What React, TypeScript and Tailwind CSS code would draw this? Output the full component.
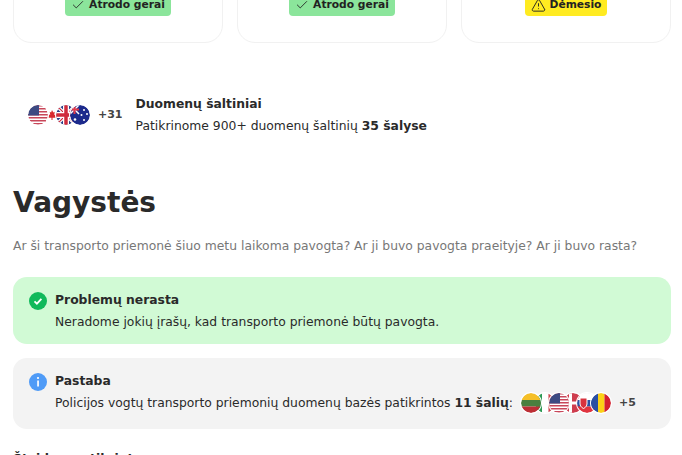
import type { ReactNode } from "react";
import { AlertTriangle, Check } from "lucide-react";

const Flag = ({ children, top }: { children: ReactNode; top?: boolean }) => (
  <svg
    viewBox="0 0 20 20"
    className={`h-5 w-5 shrink-0 rounded-full ring-1 ring-white ${top ? "relative z-10" : ""}`}
  >
    <defs>
      <clipPath id="round">
        <circle cx="10" cy="10" r="10" />
      </clipPath>
    </defs>
    <g clipPath="url(#round)">{children}</g>
  </svg>
);

const Us = () => (
  <Flag top>
    <rect width="20" height="20" fill="#fff" />
    {[0, 3, 6, 9, 12, 15, 18].map((y) => (
      <rect key={y} y={y} width="20" height="1.5" fill="#c8475a" />
    ))}
    <rect width="11" height="10.5" fill="#3c4a82" />
  </Flag>
);

const Ca = () => (
  <Flag>
    <rect width="20" height="20" fill="#fff" />
    <rect width="4" height="20" fill="#d8292f" />
    <rect x="16" width="4" height="20" fill="#d8292f" />
    <path d="M10 5l1.3 2.4 1.4-.6-.5 3.2 1.600-.8.500 1.200 1.200.2-1.600 2.200H10.500V15h-1v-2.200H6.500L4.900 10.600l1.200-.2.500-1.200 1.600.8-.500-3.200 1.400.6z" fill="#d8292f" />
  </Flag>
);

const Gb = () => (
  <Flag>
    <rect width="20" height="20" fill="#2b3f87" />
    <path d="M0 0l20 20M20 0L0 20" stroke="#fff" strokeWidth="3.500" />
    <path d="M0 0l20 20M20 0L0 20" stroke="#cf2b3c" strokeWidth="1.200" />
    <path d="M10 0v20M0 10h20" stroke="#fff" strokeWidth="6" />
    <path d="M10 0v20M0 10h20" stroke="#cf2b3c" strokeWidth="3.500" />
  </Flag>
);

const Au = () => (
  <Flag>
    <rect width="20" height="20" fill="#1c2a8c" />
    <path d="M0 0l9 9M9 0L0 9" stroke="#fff" strokeWidth="1.500" />
    <path d="M4.500 0v9M0 4.500h9" stroke="#e0394a" strokeWidth="2" />
    <circle cx="14" cy="5" r="1" fill="#fff" />
    <circle cx="17" cy="9" r="1" fill="#fff" />
    <circle cx="11.500" cy="10" r="1" fill="#fff" />
    <circle cx="14" cy="15" r="1" fill="#fff" />
    <circle cx="5" cy="14.500" r="1.300" fill="#fff" />
  </Flag>
);

const Lt = () => (
  <Flag top>
    <rect width="20" height="7" fill="#f5bf27" />
    <rect y="7" width="20" height="6.500" fill="#4a7f3f" />
    <rect y="13.500" width="20" height="6.500" fill="#bd2e35" />
  </Flag>
);

const It = () => (
  <Flag>
    <rect width="7" height="20" fill="#2e9a55" />
    <rect x="7" width="6.500" height="20" fill="#fff" />
    <rect x="13.500" width="6.500" height="20" fill="#d0414b" />
  </Flag>
);

const Dk = () => (
  <Flag>
    <rect width="20" height="20" fill="#cf3d4e" />
    <rect x="6" width="3" height="20" fill="#fff" />
    <rect y="8.500" width="20" height="3" fill="#fff" />
  </Flag>
);

const Sk = () => (
  <Flag>
    <rect width="20" height="7" fill="#fff" />
    <rect y="7" width="20" height="6.500" fill="#2b52a3" />
    <rect y="13.500" width="20" height="6.500" fill="#e0343f" />
    <path d="M3 5h7v6c0 3-3.500 4.500-3.500 4.500S3 14 3 11z" fill="#d8323e" stroke="#fff" />
  </Flag>
);

const Ro = () => (
  <Flag>
    <rect width="7" height="20" fill="#2b4fa3" />
    <rect x="7" width="6.500" height="20" fill="#fcd116" />
    <rect x="13.500" width="6.500" height="20" fill="#d5202f" />
  </Flag>
);

const FlagStack = ({ children }: { children: ReactNode }) => (
  <div className="flex items-center [&>svg+svg]:ml-[-6px]">{children}</div>
);

const StatusCard = ({ warn }: { warn?: boolean }) => (
  <div className="flex h-[100px] items-start justify-center rounded-[18px] border border-[#f1f1f1] bg-white pt-[42px]">
    {warn ? (
      <span className="flex h-[30px] items-center gap-1 rounded-[4px] bg-[#ffeb21] px-[6px] pt-[8px] text-[10.7px] font-bold text-[#222]">
        <AlertTriangle className="h-[15px] w-[15px]" strokeWidth={1.5} />
        Dėmesio
      </span>
    ) : (
      <span className="flex h-[30px] items-center gap-1 rounded-[4px] bg-[#8be59b] px-[6px] pt-[8px] text-[10.7px] font-bold text-[#222]">
        <Check className="h-[14px] w-[14px]" strokeWidth={1.5} />
        Atrodo gerai
      </span>
    )}
  </div>
);

export default function App() {
  return (
    <div className="h-[455px] overflow-hidden bg-white pr-[11px] pl-[13px] font-['DejaVu_Sans',sans-serif] text-[#2a2a2a]">
      <div className="mt-[-57px] grid grid-cols-3 gap-[14px]">
        <StatusCard />
        <StatusCard />
        <StatusCard warn />
      </div>

      <div className="mt-[51px] flex items-center pl-[15px]">
        <FlagStack>
          <Us />
          <Ca />
          <Gb />
          <Au />
        </FlagStack>
        <span className="ml-2 text-[11px] font-bold text-[#444]">+31</span>
        <div className="ml-[13px]">
          <div className="text-[12.35px] leading-[20px] font-bold">Duomenų šaltiniai</div>
          <div className="mt-[2px] text-[12.35px] leading-[20px]">
            Patikrinome 900+ duomenų šaltinių <b>35 šalyse</b>
          </div>
        </div>
      </div>

      <h1 className="mt-[48px] text-[28px] leading-[38px] font-bold">Vagystės</h1>
      <p className="mt-[14px] text-[12.35px] leading-[20px] text-[#777]">
        Ar ši transporto priemonė šiuo metu laikoma pavogta? Ar ji buvo pavogta praeityje? Ar ji buvo rasta?
      </p>

      <div className="mt-[21px] flex h-[67px] items-start gap-[8px] rounded-[14px] bg-[#d1fad5] pt-[13px] pl-[16px]">
        <svg viewBox="0 0 18 18" className="mt-[2px] h-[18px] w-[18px]">
          <circle cx="9" cy="9" r="9" fill="#10b95b" />
          <path d="M5.500 9.300l2.400 2.300 4.500-4.800" fill="none" stroke="#fff" strokeWidth="1.800" />
        </svg>
        <div>
          <div className="text-[12.35px] leading-[20px] font-bold">Problemų nerasta</div>
          <div className="mt-[2px] text-[12.35px] leading-[20px]">
            Neradome jokių įrašų, kad transporto priemonė būtų pavogta.
          </div>
        </div>
      </div>

      <div className="mt-[14px] flex h-[71px] items-start gap-[8px] rounded-[14px] bg-[#f3f3f3] pt-[13px] pl-[16px]">
        <svg viewBox="0 0 18 18" className="mt-[2px] h-[18px] w-[18px]">
          <circle cx="9" cy="9" r="9" fill="#4f9bf7" />
          <rect x="8.200" y="7.500" width="1.700" height="6" fill="#fff" />
          <circle cx="9" cy="5" r="1.100" fill="#fff" />
        </svg>
        <div>
          <div className="text-[12.35px] leading-[20px] font-bold">Pastaba</div>
          <div className="mt-[2px] flex items-center text-[12.35px] leading-[20px]">
            <span>
              Policijos vogtų transporto priemonių duomenų bazės patikrintos <b>11 šalių</b>:
            </span>
            <div className="ml-[8px]">
              <FlagStack>
                <Lt />
                <It />
                <Us />
                <Dk />
                <Sk />
                <Ro />
              </FlagStack>
            </div>
            <span className="ml-2 text-[11px] font-bold text-[#444]">+5</span>
          </div>
        </div>
      </div>

      <div className="mt-[20px] text-[12.35px] leading-[20px] font-bold">Štai kas patikrinta</div>
    </div>
  );
}
